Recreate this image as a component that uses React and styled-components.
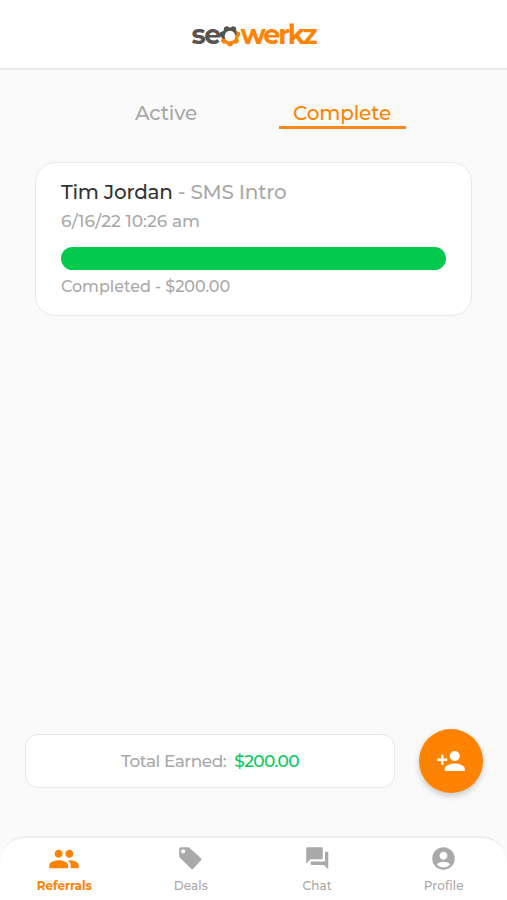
import React from 'react';
import styled, { createGlobalStyle } from 'styled-components';
import { MdPeople, MdPersonAdd, MdForum, MdAccountCircle } from 'react-icons/md';

const GlobalStyle = createGlobalStyle`
  * { box-sizing: border-box; }
  body { margin: 0; font-family: Montserrat, Inter, sans-serif; }
`;

const Screen = styled.div`
  display: flex;
  flex-direction: column;
  width: 507px;
  height: 900px;
  overflow: hidden;
  background: #fafafa;
  color: #a9a9a9;
`;

const Header = styled.header`
  display: flex;
  justify-content: center;
  height: 70px;
  padding-top: 18px;
  background: #fff;
  border-bottom: 2px solid #ebebeb;
`;

const Logo = styled.div`
  display: flex;
  align-items: flex-start;
  height: 32px;
  font: 700 27px/34px Montserrat, sans-serif;
`;

const LogoPart = styled.span`
  color: ${(p) => (p.$accent ? '#ff8200' : '#57544f')};
  letter-spacing: ${(p) => p.$spacing}px;
`;

const GearSvg = styled.svg`
  width: 22px;
  height: 22px;
  margin: 7px 0 0 -1px;
`;

const Tabs = styled.nav`
  display: flex;
  justify-content: center;
  gap: 49px;
  padding: 30px 0 0 1px;
`;

const Tab = styled.button`
  width: 127px;
  height: 29px;
  padding: 0;
  border: 0;
  border-bottom: 3px solid ${(p) => (p.$active ? '#fb891a' : 'transparent')};
  background: none;
  font: 500 20px/26px Montserrat, Inter, sans-serif;
  letter-spacing: -0.15px;
  color: ${(p) => (p.$active ? '#ff8200' : '#a9a9a9')};
  white-space: nowrap;
`;

const Main = styled.main`
  flex: 1;
  padding: 33px 35px 0 35px;
`;

const Card = styled.article`
  height: 154px;
  padding: 15px 25px 0;
  background: #fff;
  border: 1.5px solid #e8e8e8;
  border-radius: 20px;
`;

const Line = styled.div`
  height: ${(p) => p.$height}px;
  font-size: ${(p) => p.$size}px;
  line-height: ${(p) => p.$height}px;
  letter-spacing: ${(p) => p.$spacing}px;
  font-weight: 500;
  white-space: nowrap;
`;

const Name = styled.span`
  color: #333;
`;

const Progress = styled.div`
  height: 23px;
  margin: 11px 0 6px;
  border-radius: 12px;
  background: #03c94f;
`;

const Summary = styled.section`
  display: flex;
  align-items: center;
  gap: 24px;
  height: 64px;
  margin: 0 24px 43px 25px;
`;

const Total = styled.div`
  display: flex;
  flex: 1;
  align-items: center;
  justify-content: center;
  gap: 8px;
  height: 54px;
  background: #fff;
  border: 1.5px solid #e8e8e8;
  border-radius: 13px;
  font-size: 17px;
  font-weight: 500;
  letter-spacing: -0.5px;
`;

const Amount = styled.span`
  letter-spacing: -0.6px;
  color: #03c95b;
`;

const AddButton = styled.button`
  display: grid;
  place-items: center;
  width: 64px;
  height: 64px;
  padding: 0;
  border: 0;
  border-radius: 50%;
  background: #ff8200;
  color: #fff;
  box-shadow: 0 3px 6px rgba(0, 0, 0, 0.2);
`;

const BottomNav = styled.nav`
  display: grid;
  grid-template-columns: repeat(4, 1fr);
  height: 64px;
  padding-left: 1px;
  border-top: 2px solid #ededed;
  border-radius: 26px 26px 0 0;
  background: #fff;
`;

const NavItem = styled.a`
  display: flex;
  flex-direction: column;
  align-items: center;
  padding-top: 3px;
  font-size: 12px;
  line-height: 16px;
  font-weight: ${(p) => (p.$active ? 700 : 500)};
  letter-spacing: ${(p) => p.$spacing}px;
  color: ${(p) => (p.$active ? '#ff8200' : '#a9a9a9')};
`;

const IconBox = styled.span`
  display: grid;
  place-items: center;
  height: 34px;
  padding-top: ${(p) => (p.$active ? 2 : 1)}px;
  margin-bottom: 3px;
`;

const toothAngles = Array.from({ length: 7 }, (_, i) => (i * 360) / 7);

function Gear() {
  return (
    <GearSvg viewBox="0 0 22 22" fill="none">
      <path d="M5 14.5A6.9 6.9 0 1 1 17.8 10" stroke="#57544f" strokeWidth="3.2" />
      <path d="M17.8 10A6.9 6.9 0 0 1 5 14.5" stroke="#ff8200" strokeWidth="3.2" />
      {toothAngles.map((a) => (
        <path
          key={a}
          d="M7.4 18L9.3 21.3H12.7L14.6 18Z"
          transform={`rotate(${a} 11 11)`}
          fill={a < 52 || a > 250 ? '#ff8200' : '#57544f'}
        />
      ))}
    </GearSvg>
  );
}

function TagIcon() {
  return (
    <svg width="23" height="23" viewBox="0 0 22 22" fill="currentColor">
      <path
        fillRule="evenodd"
        d="M1.8.2H8.7Q9.5.2 10.2.9L21.2 10.9Q22 11.7 21.2 12.5L13.4 21Q12.6 21.8 11.8 21L.9 10.3Q.2 9.6.2 8.8V1.8Q.2.2 1.8.2ZM4 2.1a2 2 0 1 0 0 4 2 2 0 0 0 0-4Z"
      />
    </svg>
  );
}

const navItems = [
  { label: 'Referrals', Icon: MdPeople, size: 32, active: true, spacing: -0.1 },
  { label: 'Deals', Icon: TagIcon, spacing: 0.1 },
  { label: 'Chat', Icon: MdForum, size: 26.5, spacing: 0.1 },
  { label: 'Profile', Icon: MdAccountCircle, size: 27, spacing: 0.1 },
];

export default function App() {
  return (
    <Screen>
      <GlobalStyle />
      <Header>
        <Logo>
          <LogoPart $spacing={-1.7}>se</LogoPart>
          <Gear />
          <LogoPart $accent $spacing={-2.1}>werkz</LogoPart>
        </Logo>
      </Header>
      <Tabs>
        <Tab>Active</Tab>
        <Tab $active>Complete</Tab>
      </Tabs>
      <Main>
        <Card>
          <Line $height={28} $size={20} $spacing={-0.23}>
            <Name>Tim Jordan</Name> - SMS Intro
          </Line>
          <Line $height={30} $size={17} $spacing={0.03}>6/16/22 10:26 am</Line>
          <Progress />
          <Line $height={22} $size={16} $spacing={-0.06}>Completed - $200.00</Line>
        </Card>
      </Main>
      <Summary>
        <Total>
          <span>Total Earned:</span>
          <Amount>$200.00</Amount>
        </Total>
        <AddButton aria-label="Add referral"><MdPersonAdd size={30} /></AddButton>
      </Summary>
      <BottomNav>
        {navItems.map(({ label, Icon, size, active, spacing }) => (
          <NavItem key={label} $active={active} $spacing={spacing}>
            <IconBox $active={active}><Icon size={size} /></IconBox>
            {label}
          </NavItem>
        ))}
      </BottomNav>
    </Screen>
  );
}
